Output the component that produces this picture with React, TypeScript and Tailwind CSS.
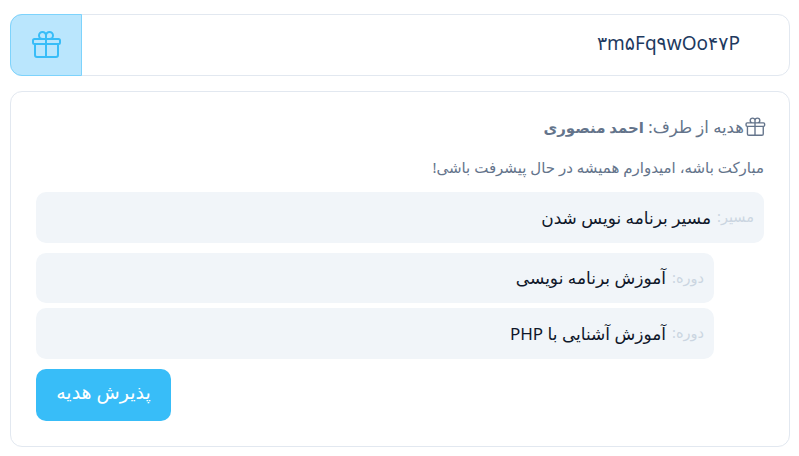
import React from 'react';

const GiftIcon = ({ className }: { className: string }) => (
  <svg className={className} viewBox="0 0 24 24" fill="none" stroke="currentColor" strokeWidth="1.5" strokeLinecap="round" strokeLinejoin="round">
    <path d="M21 11.25v8.25a1.5 1.5 0 0 1-1.5 1.5H5.25a1.5 1.5 0 0 1-1.5-1.5v-8.25M12 4.875A2.625 2.625 0 1 0 9.375 7.5H12m0-2.625V7.5m0-2.625A2.625 2.625 0 1 1 14.625 7.5H12m0 0V21m-8.625-9.75h18c.621 0 1.125-.504 1.125-1.125v-1.5c0-.621-.504-1.125-1.125-1.125h-18c-.621 0-1.125.504-1.125 1.125v1.5c0 .621.504 1.125 1.125 1.125Z" />
  </svg>
);

const Row = ({ label, title }: { label: string; title: string }) => (
  <div className="flex h-[50.5px] items-center rounded-[10px] bg-[#f1f5f9] px-2.5">
    <span className="ml-1.5 text-[14.5px] text-[#cbd5e1]">{label}</span>
    <span className="text-[17px] text-[#0f172a]">{title}</span>
  </div>
);

const App: React.FC = () => {
  return (
    <div dir="ltr" className="min-h-[456px] bg-white pl-2.5 pr-[9px] pt-3.5 font-['Noto_Sans','DejaVu_Sans',sans-serif]">
      {/* Gift code */}
      <div className="flex h-[62px] rounded-xl border border-[#e2e8f0] bg-white">
        <div className="-m-px flex w-[72px] items-center justify-center rounded-l-xl border border-[#7dd3fc] bg-[#bae6fd] text-[#38bdf8]">
          <GiftIcon className="h-8 w-8" />
        </div>
        <div className="flex flex-1 -translate-y-[2px] items-center justify-end pr-[49px] text-[19px] text-[#1e3a5f]">
          ۳m۵Fq۹wOo۴۷P
        </div>
      </div>

      {/* Gift details */}
      <div dir="rtl" className="mt-[15px] flex h-[356px] flex-col rounded-xl border border-[#e2e8f0] bg-white px-[25px] pt-[23px]">
        <div className="flex h-6 items-center text-[16.5px] leading-5 text-[#64748b]">
          <GiftIcon className="-mr-0.5 h-[22px] w-[22px] shrink-0" />
          <span>
            هدیه از طرف: <span className="text-[15px] font-bold">احمد منصوری</span>
          </span>
        </div>
        <p className="mt-[17px] h-6 text-[15px] leading-[23px] text-[#64748b]">مبارکت باشه، امیدوارم همیشه در حال پیشرفت باشی!</p>
        <div className="mt-3">
          <Row label="مسیر:" title="مسیر برنامه نویس شدن" />
        </div>
        <div className="ml-0 mr-[50px] mt-2.5 flex flex-col gap-[5px]">
          <Row label="دوره:" title="آموزش برنامه نویسی" />
          <Row label="دوره:" title="آموزش آشنایی با PHP" />
        </div>
        <button className="mt-2.5 h-[52px] w-[135px] self-end rounded-[10px] bg-[#38bdf8] pb-1 text-[19px] font-medium text-white">
          پذیرش هدیه
        </button>
      </div>
    </div>
  );
};

export default App;
